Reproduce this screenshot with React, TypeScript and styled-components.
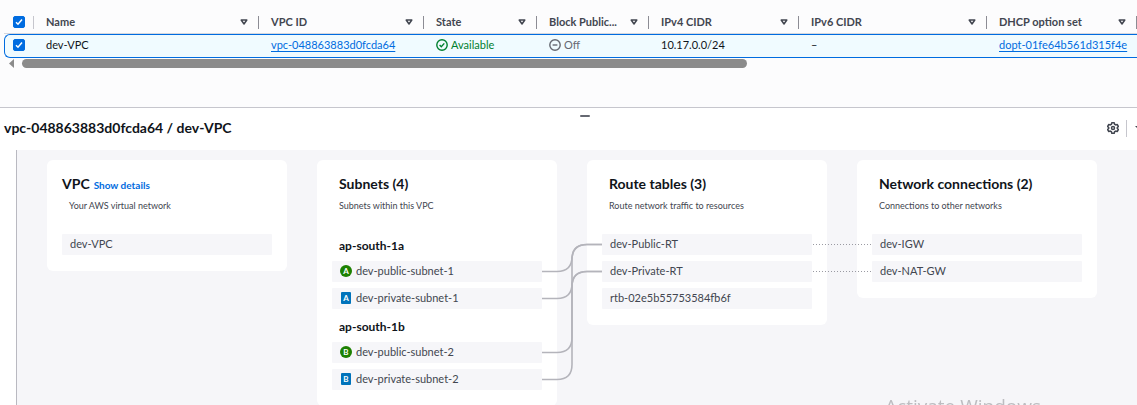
import React from "react";
import styled, { createGlobalStyle, css } from "styled-components";

const Global = createGlobalStyle`
  * { box-sizing: border-box; }
  html, body, #root { height: 100%; }
  body {
    margin: 0;
    overflow: hidden;
    background: #fcfcfd;
    color: #0f141a;
    font-family: Lato, "Noto Sans", sans-serif;
    font-size: 11px;
    line-height: 16px;
  }
  h1, h2, h3, p, ul { margin: 0; padding: 0; }
  ul { list-style: none; }
  button { font: inherit; color: inherit; background: none; border: 0; padding: 0; cursor: pointer; }
`;

const Page = styled.div`
  display: flex;
  flex-direction: column;
  min-height: 100%;
`;

/* ---------- resource table ---------- */

const TableSection = styled.section`
  height: 107px;
  padding: 11px 0 0 4px;
  overflow: hidden;
`;

const Table = styled.table`
  width: 100%;
  min-width: 1160px;
  table-layout: fixed;
  border-collapse: separate;
  border-spacing: 0;
`;

const Col = styled.col<{ $w?: number }>`
  width: ${(p) => (p.$w ? `${p.$w}px` : "auto")};
`;

const Th = styled.th`
  height: 23px;
  padding: 0;
  border-bottom: 1px solid #d5d7dd;
  color: #424650;
  font-weight: 700;
  text-align: left;
`;

const HeadCell = styled.div<{ $check?: boolean }>`
  display: flex;
  align-items: center;
  justify-content: space-between;
  height: 13px;
  padding: 0 10px 0 ${(p) => (p.$check ? 9 : 12)}px;
  border-right: 1px solid ${(p) => (p.$check ? "#c6c6cd" : "#8c8c94")};
  white-space: nowrap;
`;

const SortButton = styled.button`
  display: flex;
`;

const Td = styled.td`
  height: 24px;
  padding: 0 12px 2px;
  background: #f0fbff;
  border: solid #006ce0;
  border-width: 1px 0;
  white-space: nowrap;
  &:first-child {
    padding: 0 8px 2px;
    border-left-width: 1px;
    border-radius: 6px 0 0 6px;
  }
`;

const Link = styled.a`
  color: #006ce0;
  text-decoration: underline;
  text-underline-offset: 2px;
`;

const Status = styled.span<{ $tone: "good" | "idle" }>`
  display: flex;
  align-items: center;
  gap: 3px;
  color: ${(p) => (p.$tone === "good" ? "#00802f" : "#656871")};
`;

const CheckLabel = styled.label`
  display: grid;
  width: 12px;
  height: 12px;
  > * { grid-area: 1 / 1; }
`;

const CheckInput = styled.input`
  appearance: none;
  width: 12px;
  height: 12px;
  margin: 0;
  border: 1px solid #8c8c94;
  border-radius: 2px;
  &:checked { background: #006ce0; border-color: #006ce0; }
  &:not(:checked) + svg { visibility: hidden; }
`;

const Scrollbar = styled.div`
  display: flex;
  align-items: center;
  gap: 8px;
  height: 9px;
  margin: 1px 0 0 5px;
`;

const ScrollTrack = styled.div`
  flex: 1;
`;

const Thumb = styled.div`
  width: 65%;
  height: 9px;
  border-radius: 5px;
  background: #8b8b8b;
`;

/* ---------- split panel ---------- */

const Panel = styled.section`
  display: flex;
  flex-direction: column;
  flex: 1;
  background: #fff;
  border-top: 1px solid #c6c6cd;
`;

const HandleRow = styled.div`
  display: flex;
  justify-content: center;
  height: 11px;
  padding: 7px 0 0 33px;
`;

const Handle = styled.button`
  width: 10px;
  height: 2px;
  border-radius: 1px;
  background: #656871;
`;

const PanelHeader = styled.header`
  display: flex;
  align-items: center;
  justify-content: space-between;
  height: 18px;
  margin-bottom: 13px;
  padding-left: 4px;
`;

const PanelTitle = styled.h1`
  font-size: 14px;
  line-height: 18px;
  font-weight: 700;
`;

const PanelTools = styled.div`
  display: flex;
  align-items: center;
  height: 18px;
  margin-right: -6px;
`;

const GearButton = styled.button`
  display: flex;
  padding-right: 7px;
`;

const MoreButton = styled.button`
  display: flex;
  align-items: center;
  height: 17px;
  padding-left: 8px;
  border-left: 1px solid #c6c6cd;
`;

const Canvas = styled.div`
  position: relative;
  display: flex;
  align-items: flex-start;
  flex: 1;
  gap: 30px;
  margin-left: 16px;
  padding: 10px 30px 0;
  background: #f6f6f9;
  border-left: 1px solid #b9b9c1;
`;

const Card = styled.article`
  flex: none;
  width: 240px;
  padding: 15px 15px 16px;
  border-radius: 6px;
  background: #fff;
`;

const CardHead = styled.div<{ $flush?: boolean }>`
  display: flex;
  align-items: baseline;
  gap: 4px;
  height: 18px;
  padding-left: ${(p) => (p.$flush ? 0 : 7)}px;
`;

const CardTitle = styled.h2`
  font-size: 14px;
  line-height: 18px;
  font-weight: 700;
`;

const ShowDetails = styled.button`
  && { color: #006ce0; font-size: 10px; font-weight: 700; }
`;

const CardText = styled.p`
  margin: 5px 0 21px;
  padding-left: 7px;
  color: #424650;
  font-size: 9px;
  line-height: 15px;
`;

const Stack = styled.div`
  display: flex;
  flex-direction: column;
  gap: 6px;
`;

const Items = styled.ul`
  display: flex;
  flex-direction: column;
  gap: 6px;
`;

const ZoneTitle = styled.h3`
  height: 21px;
  padding-left: 7px;
  font-size: 12px;
  line-height: 23px;
  font-weight: 700;
`;

const Item = styled.li`
  display: flex;
  align-items: center;
  gap: 4px;
  height: 21px;
  padding: 0 8px 1px;
  border-radius: 1px;
  background: #f6f6f9;
  color: #424650;
`;

const Badge = styled.span<{ $open: boolean }>`
  display: flex;
  align-items: center;
  justify-content: center;
  height: 12px;
  color: #fff;
  font-size: 8px;
  line-height: 12px;
  font-weight: 700;
  ${(p) =>
    p.$open
      ? css`width: 12px; border-radius: 50%; background: #1d8102;`
      : css`width: 10px; margin: 0 1px; border-radius: 1px; background: #0073bb;`}
`;

const Links = styled.svg`
  position: absolute;
  left: 0;
  top: 0;
  pointer-events: none;
`;

const Watermark = styled.div`
  position: fixed;
  right: 96px;
  bottom: -15px;
  color: #bdbdc1;
  font-family: "Open Sans", sans-serif;
  font-size: 19px;
  line-height: 27px;
  white-space: nowrap;
`;

const Checkbox = ({ name }: { name: string }) => (
  <CheckLabel>
    <CheckInput type="checkbox" defaultChecked aria-label={name} />
    <svg width="12" height="12" viewBox="0 0 12 12" fill="none" stroke="#fff" strokeWidth="1.5" pointerEvents="none">
      <path d="M3 6.2l2 2 4-4.6" />
    </svg>
  </CheckLabel>
);

const Sort = ({ name }: { name: string }) => (
  <SortButton aria-label={`Sort by ${name}`}>
    <svg width="8" height="8" viewBox="0 0 8 8" fill="none" stroke="#424650" strokeWidth="1.5" strokeLinejoin="round">
      <path d="M1.2 2h5.6L4 6z" />
    </svg>
  </SortButton>
);

const columns = ["Name", "VPC ID", "State", "Block Public...", "IPv4 CIDR", "IPv6 CIDR", "DHCP option set"];
const widths = [225, 165, 113, 112, 150, 188, 150];

const subnets = [
  { zone: "ap-south-1a", letter: "A", names: ["dev-public-subnet-1", "dev-private-subnet-1"] },
  { zone: "ap-south-1b", letter: "B", names: ["dev-public-subnet-2", "dev-private-subnet-2"] },
];

const link = (from: number, to: number) =>
  `M525 ${from}h15q15 0 15 -15V${to + 15}q0 -15 15 -15h15`;

const NameList = ({ names }: { names: string[] }) => (
  <Items>
    {names.map((n) => (
      <Item key={n}>{n}</Item>
    ))}
  </Items>
);

export default function App() {
  return (
    <Page>
      <Global />
      <TableSection>
        <Table>
          <colgroup>
            <Col $w={30} />
            {widths.map((w, i) => (
              <Col key={i} $w={w} />
            ))}
            <Col />
          </colgroup>
          <thead>
            <tr>
              <Th><HeadCell $check><Checkbox name="Select all" /></HeadCell></Th>
              {columns.map((c) => (
                <Th key={c}><HeadCell>{c}<Sort name={c} /></HeadCell></Th>
              ))}
              <Th />
            </tr>
          </thead>
          <tbody>
            <tr>
              <Td><Checkbox name="Select dev-VPC" /></Td>
              <Td>dev-VPC</Td>
              <Td><Link href="#vpc">vpc-048863883d0fcda64</Link></Td>
              <Td>
                <Status $tone="good">
                  <svg width="12" height="12" viewBox="0 0 12 12" fill="none" stroke="currentColor" strokeWidth="1.4">
                    <circle cx="6" cy="6" r="5.2" />
                    <path d="M3.6 6.1l1.7 1.7 3-3.4" />
                  </svg>
                  Available
                </Status>
              </Td>
              <Td>
                <Status $tone="idle">
                  <svg width="12" height="12" viewBox="0 0 12 12" fill="none" stroke="currentColor" strokeWidth="1.4">
                    <circle cx="6" cy="6" r="5.2" />
                    <path d="M3.6 6h4.8" />
                  </svg>
                  Off
                </Status>
              </Td>
              <Td>10.17.0.0/24</Td>
              <Td>–</Td>
              <Td><Link href="#dopt">dopt-01fe64b561d315f4e</Link></Td>
              <Td />
            </tr>
          </tbody>
        </Table>
        <Scrollbar>
          <svg width="5" height="9" viewBox="0 0 5 9" fill="#8b8b8b"><path d="M5 0v9L0 4.5z" /></svg>
          <ScrollTrack><Thumb /></ScrollTrack>
        </Scrollbar>
      </TableSection>

      <Panel>
        <HandleRow><Handle aria-label="Resize panel" /></HandleRow>
        <PanelHeader>
          <PanelTitle>vpc-048863883d0fcda64 / dev-VPC</PanelTitle>
          <PanelTools>
            <GearButton aria-label="Panel preferences">
              <svg width="12" height="12" viewBox="0 0 16 16" fill="none" stroke="#424650" strokeWidth="2" strokeLinejoin="round">
                <path d="M6.4 1h3.2l.5 2 1.5.9 2-.6 1.6 2.8-1.5 1.4v1l1.5 1.4-1.6 2.8-2-.6-1.5.9-.5 2H6.4l-.5-2-1.5-.9-2 .6L.8 9.9l1.5-1.4v-1L.8 6.100l1.6-2.8 2 .6L5.9 3z" />
                <circle cx="8" cy="8" r="2" />
              </svg>
            </GearButton>
            <MoreButton aria-label="Close panel">
              <svg width="8" height="6" viewBox="0 0 8 6" fill="#424650"><path d="M0 1h8L4 5z" /></svg>
            </MoreButton>
          </PanelTools>
        </PanelHeader>
        <Canvas>
          <Card>
            <CardHead $flush>
              <CardTitle>VPC</CardTitle>
              <ShowDetails>Show details</ShowDetails>
            </CardHead>
            <CardText>Your AWS virtual network</CardText>
            <NameList names={["dev-VPC"]} />
          </Card>
          <Card>
            <CardHead><CardTitle>Subnets (4)</CardTitle></CardHead>
            <CardText>Subnets within this VPC</CardText>
            <Stack>
              {subnets.map((s) => (
                <Stack key={s.zone}>
                  <ZoneTitle>{s.zone}</ZoneTitle>
                  <Items>
                    {s.names.map((n, i) => (
                      <Item key={n}><Badge $open={i === 0}>{s.letter}</Badge>{n}</Item>
                    ))}
                  </Items>
                </Stack>
              ))}
            </Stack>
          </Card>
          <Card>
            <CardHead><CardTitle>Route tables (3)</CardTitle></CardHead>
            <CardText>Route network traffic to resources</CardText>
            <NameList names={["dev-Public-RT", "dev-Private-RT", "rtb-02e5b55753584fb6f"]} />
          </Card>
          <Card>
            <CardHead><CardTitle>Network connections (2)</CardTitle></CardHead>
            <CardText>Connections to other networks</CardText>
            <NameList names={["dev-IGW", "dev-NAT-GW"]} />
          </Card>
          <Links width="860" height="240" viewBox="0 0 860 240" fill="none" stroke="#b4b4bb" aria-hidden="true">
            <g strokeWidth="1.6">
              <path d={link(121.5, 94.5)} />
              <path d={link(148.5, 121.5)} />
              <path d={link(202.5, 94.5)} />
              <path d={link(229.5, 121.5)} />
            </g>
            <path d="M796 94.5H855M796 121.5H855" strokeDasharray="1 2" stroke="#9a9aa2" />
          </Links>
        </Canvas>
      </Panel>
      <Watermark>Activate Windows</Watermark>
    </Page>
  );
}
